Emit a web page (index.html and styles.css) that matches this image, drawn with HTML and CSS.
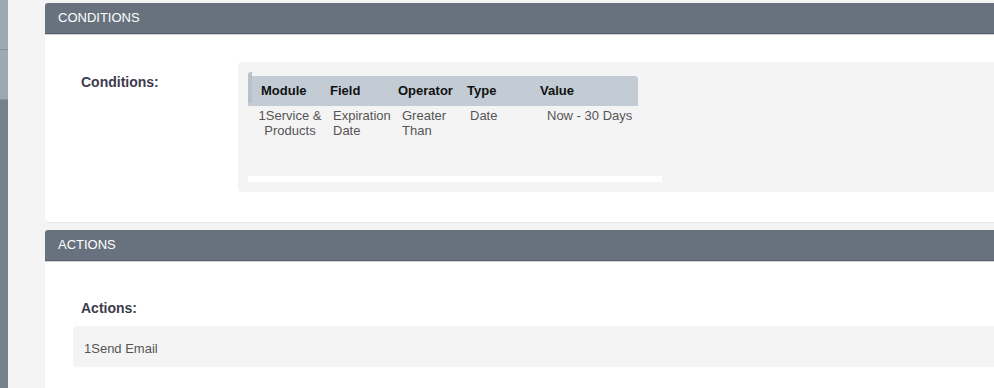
FILE: index.html
```html
<!DOCTYPE html>
<html lang="en">

<head>
    <meta charset="UTF-8">
    <meta name="viewport" content="width=device-width, initial-scale=1.0">
    <title>Workflow Details</title>
    <link rel="stylesheet" href="styles.css">
</head>

<body>
    <div class="sidebar">
        <div class="side-item"></div>
        <div class="side-item"></div>
        <div class="side-rest"></div>
    </div>

    <div class="main">
        <div class="panel">
            <div class="panel-head">CONDITIONS</div>
            <div class="panel-body conditions-body">
                <div class="label">Conditions:</div>
                <div class="cond-box">
                    <div class="cond-table">
                        <div class="cond-head">
                            <span>Module</span>
                            <span>Field</span>
                            <span>Operator</span>
                            <span>Type</span>
                            <span>Value</span>
                        </div>
                        <div class="cond-row">
                            <span class="cell-module">1Service &amp; Products</span>
                            <span>Expiration Date</span>
                            <span>Greater Than</span>
                            <span>Date</span>
                            <span>Now - 30 Days</span>
                        </div>
                    </div>
                    <div class="scroll-track"></div>
                </div>
            </div>
        </div>

        <div class="panel">
            <div class="panel-head">ACTIONS</div>
            <div class="panel-body actions-body">
                <div class="label">Actions:</div>
                <div class="action-item">1Send Email</div>
            </div>
        </div>
    </div>
</body>

</html>
```

FILE: styles.css
```css
body {
    font-family: "Liberation Sans", Arial, sans-serif;
    font-size: 13px;
    margin: 0;
    padding: 0;
    height: 388px;
    display: flex;
    background-color: #f4f4f4;
    overflow: hidden;
}

.sidebar {
    width: 8px;
    display: flex;
    flex-direction: column;
    flex-shrink: 0;
}

.side-item {
    height: 49px;
    background-color: #9ca9b5;
    border-bottom: 1px solid #8794a0;
}

.side-rest {
    flex: 1;
    background-color: #74808a;
}

.main {
    flex: 1;
    padding: 3px 0 0 37px;
    margin-right: -20px;
}

.panel {
    background-color: #fff;
    border-radius: 4px;
    margin-bottom: 8px;
    box-shadow: 0 1px 1px rgba(0, 0, 0, 0.05);
}

.panel-head {
    height: 30px;
    line-height: 30px;
    padding-left: 13px;
    color: #fff;
    background-color: #67727e;
    border-bottom: 1px solid #56606a;
    border-radius: 3px 3px 0 0;
    box-shadow: 0 1px 0 #cdd1d5;
}

.label {
    font-size: 14px;
    font-weight: bold;
    line-height: 16px;
    color: #3c3b4e;
}

.conditions-body {
    display: flex;
    padding: 28px 0 30px 36px;
}

.conditions-body .label {
    width: 157px;
    margin-top: 12px;
}

.cond-box {
    flex: 1;
    height: 110px;
    padding: 10px 0 10px 10px;
    background-color: #f4f4f4;
    border-radius: 4px;
}

.cond-table {
    position: relative;
    width: 414px;
    height: 100px;
    padding-top: 4px;
}

.cond-table::before {
    content: "";
    position: absolute;
    left: 0;
    top: 0;
    width: 4px;
    height: 31px;
    background-color: #b6c1cb;
    border-radius: 3px 0 0 0;
}

.cond-head {
    display: grid;
    grid-template-columns: 69px 68px 69px 73px auto;
    width: 377px;
    height: 30px;
    line-height: 30px;
    padding-left: 13px;
    font-weight: bold;
    color: #111;
    background-color: #c3ccd5;
    border-radius: 0 3px 0 0;
}

.cond-row {
    display: grid;
    grid-template-columns: 64px 58px 57px 66px auto;
    column-gap: 11px;
    margin-top: 2px;
    padding-left: 10px;
    line-height: 15px;
    color: #555;
}

.cell-module {
    text-align: center;
}

.scroll-track {
    width: 414px;
    height: 6px;
    background-color: #fff;
}

.actions-body {
    padding: 39px 0 30px 0;
}

.actions-body .label {
    padding-left: 36px;
}

.action-item {
    margin: 10px 0 0 28px;
    padding: 15px 11px 11px;
    line-height: 15px;
    color: #555;
    background-color: #f4f4f4;
    border-radius: 4px;
}
```
